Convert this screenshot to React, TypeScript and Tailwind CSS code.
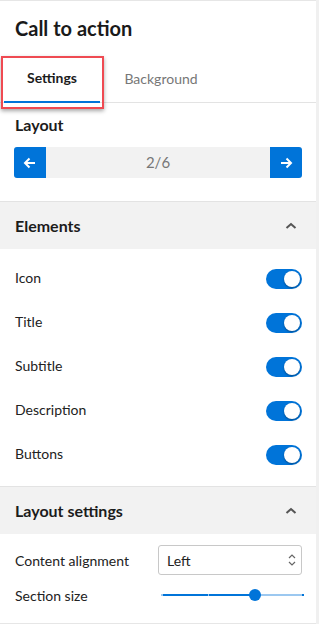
import React from 'react';

const BLUE = 'bg-[#0074d9]';

const Toggle: React.FC = () => (
  <div className={`w-[36px] h-[20px] rounded-full ${BLUE} relative`}>
    <div className="absolute right-[2px] top-[2px] w-[16px] h-[16px] rounded-full bg-white shadow-[0_1px_2px_rgba(0,0,0,0.35)]" />
  </div>
);

const Chevron: React.FC = () => (
  <svg width="14" height="14" viewBox="0 0 14 14" className="text-[#555]">
    <path d="M2.5 9 L7 5 L11.5 9" fill="none" stroke="currentColor" strokeWidth="2" />
  </svg>
);

const SectionHeader: React.FC<{ title: string }> = ({ title }) => (
  <div className="h-[48px] bg-[#f2f2f2] border-t border-[#e3e3e3] flex items-center justify-between pl-[15px] pr-[18px]">
    <span className="text-[16px] font-bold text-[#1c1c1c]">{title}</span>
    <Chevron />
  </div>
);

const elements = ['Icon', 'Title', 'Subtitle', 'Description', 'Buttons'];

export default function App() {
  return (
    <div className="flex bg-[#f0f0f0] min-h-[624px]" style={{ fontFamily: 'Lato, "Noto Sans", sans-serif' }}>
      <div className="w-[316px] bg-white border-t border-[#e6e6e6] border-b text-[#222]">
        <div className="h-[53px] px-[15px] flex items-center">
          <h1 className="text-[20px] font-bold text-[#1a1a1a]">Call to action</h1>
        </div>

        <div className="relative h-[49px] flex px-[4px] border-b border-[#e3e3e3]">
          <div className="w-[96px] flex items-center justify-center text-[14px] font-bold text-[#1c1c1c] border-b-2 border-[#0074d9] -mb-px">
            Settings
          </div>
          <div className="w-[122px] flex items-center justify-center text-[14px] text-[#777]">
            Background
          </div>
          <div className="absolute left-[1px] top-[2px] w-[103px] h-[53px] border-2 border-[#ef4a52] shadow-[0_2px_4px_rgba(0,0,0,0.35)] pointer-events-none" />
        </div>

        <div className="px-[14px] pt-[12px] pb-[23px]">
          <div className="text-[16px] leading-[20px] font-bold text-[#1c1c1c] px-px">Layout</div>
          <div className="mt-[12px] h-[31px] flex rounded-[3px] overflow-hidden bg-[#f2f2f2]">
            <div className={`w-[32px] ${BLUE} flex items-center justify-center`}>
              <svg width="14" height="14" viewBox="0 0 14 14">
                <path d="M12 7 H2 M6.5 2.5 L2 7 L6.5 11.5" fill="none" stroke="white" strokeWidth="2" />
              </svg>
            </div>
            <div className="flex-1 flex items-center justify-center text-[15px] text-[#777]">2/6</div>
            <div className={`w-[32px] ${BLUE} flex items-center justify-center`}>
              <svg width="14" height="14" viewBox="0 0 14 14">
                <path d="M2 7 H12 M7.5 2.5 L12 7 L7.5 11.5" fill="none" stroke="white" strokeWidth="2" />
              </svg>
            </div>
          </div>
        </div>

        <SectionHeader title="Elements" />
        <div className="pt-[8px] pb-[9px]">
          {elements.map((e) => (
            <div key={e} className="h-[44px] flex items-center justify-between pl-[15px] pr-[14px]">
              <span className="text-[14px] leading-[18px] text-[#222] -mt-[2px]">{e}</span>
              <Toggle />
            </div>
          ))}
        </div>

        <SectionHeader title="Layout settings" />
        <div className="pl-[15px] pr-[14px] pt-[11px] pb-[16px]">
          <div className="flex items-center justify-between">
            <span className="text-[14px] text-[#222]">Content alignment</span>
            <div className="w-[144px] h-[30px] border border-[#c8c8c8] rounded-[3px] flex items-center justify-between pl-[8px] pr-[4px]">
              <span className="text-[14px] text-[#222]">Left</span>
              <svg width="10" height="16" viewBox="0 0 10 16" className="text-[#666]">
                <path d="M2 6 L5 3 L8 6 M2 10 L5 13 L8 10" fill="none" stroke="currentColor" strokeWidth="1.2" />
              </svg>
            </div>
          </div>
          <div className="mt-[10px] h-[20px] flex items-center justify-between">
            <span className="text-[14px] text-[#222]">Section size</span>
            <div className="relative w-[143px] h-[12px] mr-[-2px]">
              <div className="absolute left-0 top-[5px] h-[2px] w-[94px] bg-[#0074d9]" />
              <div className="absolute left-[94px] top-[5px] h-[2px] right-0 bg-[#9cc8f0]" />
              <div className="absolute left-0 top-[5px] h-[2px] w-[2px] bg-[#9cc8f0]" />
              <div className="absolute left-[47px] top-[5px] h-[2px] w-[1px] bg-[#9cc8f0]" />
              <div className="absolute right-0 top-[5px] h-[2px] w-[2px] bg-[#0074d9]" />
              <div className="absolute left-[88px] top-0 w-[12px] h-[12px] rounded-full bg-[#0074d9]" />
            </div>
          </div>
        </div>
      </div>
    </div>
  );
}
